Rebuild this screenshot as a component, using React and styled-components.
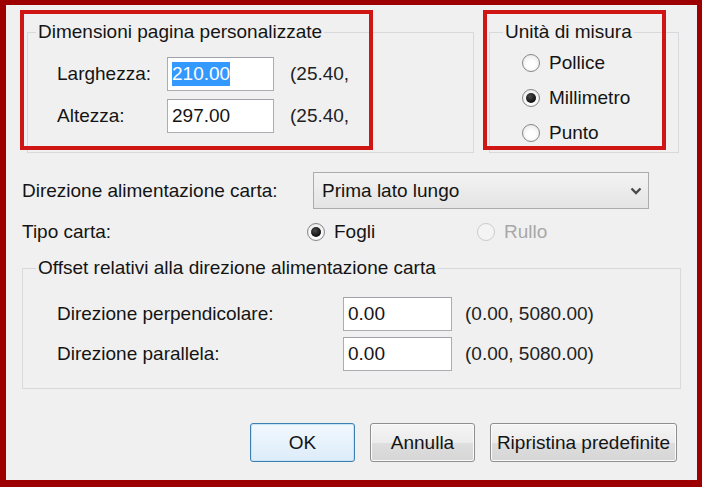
import React from "react";
import styled, { createGlobalStyle } from "styled-components";

const GlobalStyle = createGlobalStyle`
  html, body {
    margin: 0;
    padding: 0;
    background: #f0f0f0;
  }
  body {
    font-family: "Liberation Sans", Arial, sans-serif;
    font-size: 19px;
    color: #141414;
  }
`;

const Dialog = styled.div`
  position: relative;
  box-sizing: border-box;
  width: 702px;
  height: 487px;
  border-style: solid;
  border-color: #9c0000;
  border-width: 5px 5px 7px 6px;
  background: #f0f0f0;
  padding: 16px 16px 0 16px;
  display: flex;
  flex-direction: column;
`;

const TopRow = styled.div`
  display: flex;
  gap: 15px;
  padding-left: 5px;
`;

const GroupBox = styled.fieldset`
  box-sizing: border-box;
  margin: 0;
  padding: 0;
  min-width: 0;
  width: ${(p) => p.$w}px;
  height: ${(p) => p.$h}px;
  border: 1px solid #d7d9dc;
`;

const Legend = styled.legend`
  margin-left: ${(p) => p.$indent}px;
  padding: 0 2px;
  line-height: 22px;
`;

const FieldGrid = styled.div`
  display: grid;
  grid-template-columns: ${(p) => p.$cols};
  column-gap: ${(p) => p.$gap}px;
  row-gap: ${(p) => p.$rowGap}px;
  align-items: center;
  padding: ${(p) => p.$pad};
`;

const TextBox = styled.div`
  box-sizing: border-box;
  height: 34px;
  display: flex;
  align-items: center;
  padding-left: 4px;
  background: #fff;
  border: 1px solid #abadb3;
  border-top-color: #9fa2a9;
`;

const Selected = styled.span`
  background: #3399ff;
  color: #fff;
  line-height: 24px;
`;

const Hint = styled.span`
  color: #222;
  white-space: nowrap;
`;

const RadioList = styled.div`
  display: flex;
  flex-direction: column;
  padding: 2px 0 0 32px;
`;

const RadioItem = styled.label`
  display: flex;
  align-items: center;
  gap: 9px;
  height: ${(p) => p.$h || 35}px;
  width: ${(p) => (p.$w ? `${p.$w}px` : "auto")};
  color: ${(p) => (p.$disabled ? "#a8a8a8" : "#141414")};
`;

const RadioCircle = styled.span`
  position: relative;
  box-sizing: border-box;
  width: 18px;
  height: 18px;
  border-radius: 50%;
  border: 1px solid ${(p) => (p.$disabled ? "#cbcbcb" : "#85878a")};
  background: ${(p) =>
    p.$disabled
      ? "#f4f4f4"
      : "radial-gradient(circle at 50% 60%, #ffffff 30%, #e2e2e2 100%)"};
  flex-shrink: 0;

  &::after {
    content: "";
    display: ${(p) => (p.$checked ? "block" : "none")};
    position: absolute;
    left: 3px;
    top: 3px;
    width: 10px;
    height: 10px;
    border-radius: 50%;
    background: radial-gradient(circle at 40% 35%, #4a4a4a 0%, #0f0f0f 70%);
  }
`;

const FormRow = styled.div`
  display: flex;
  align-items: center;
  height: ${(p) => p.$h}px;
  margin-top: ${(p) => p.$mt}px;
`;

const RowLabel = styled.span`
  width: ${(p) => p.$w}px;
  flex-shrink: 0;
`;

const Combo = styled.div`
  box-sizing: border-box;
  width: 336px;
  height: 37px;
  display: flex;
  align-items: center;
  justify-content: space-between;
  padding: 0 6px 0 8px;
  border: 1px solid #acacac;
  background: linear-gradient(#f3f3f3, #e4e4e4);
`;

const OffsetBox = styled(GroupBox)`
  margin-top: 10px;
`;

const ButtonRow = styled.div`
  display: flex;
  justify-content: flex-end;
  gap: 15px;
  padding-right: 4px;
  margin-top: 34px;
`;

const Button = styled.button`
  box-sizing: border-box;
  width: ${(p) => p.$w}px;
  height: 39px;
  font-family: inherit;
  font-size: 19px;
  color: #141414;
  border-radius: 3px;
  border: 1px solid ${(p) => (p.$default ? "#3c7fb1" : "#8f8f8f")};
  background: ${(p) =>
    p.$default
      ? "linear-gradient(#f2f8fd, #dcecf9)"
      : "linear-gradient(#f5f5f5 0%, #ececec 50%, #dedede 51%, #d6d6d6 100%)"};
  box-shadow: inset 0 0 0 1px ${(p) => (p.$default ? "#c8e3f6" : "#fbfbfb")};
  padding: 0;
`;

const Highlight = styled.div`
  position: absolute;
  box-sizing: border-box;
  top: 5px;
  left: ${(p) => p.$left}px;
  width: ${(p) => p.$w}px;
  height: 140px;
  border: 4px solid #d01515;
  pointer-events: none;
`;

const Chevron = () => (
  <svg width="12" height="8" viewBox="0 0 12 8">
    <path d="M1.5 1.5 L6 6 L10.5 1.5" fill="none" stroke="#4a4a4a" strokeWidth="2.4" />
  </svg>
);

const Radio = ({ label, checked, disabled, w, h }) => (
  <RadioItem $disabled={disabled} $w={w} $h={h}>
    <RadioCircle $checked={checked} $disabled={disabled} />
    {label}
  </RadioItem>
);

export default function App() {
  return (
    <>
      <GlobalStyle />
      <Dialog>
        <TopRow>
          <GroupBox $w={447} $h={132}>
            <Legend $indent={8}>Dimensioni pagina personalizzate</Legend>
            <FieldGrid $cols="94px 107px auto" $gap={16} $rowGap={8} $pad="14px 0 0 29px">
              <span>Larghezza:</span>
              <TextBox>
                <Selected>210.00</Selected>
              </TextBox>
              <Hint>(25.40,</Hint>
              <span>Altezza:</span>
              <TextBox>297.00</TextBox>
              <Hint>(25.40,</Hint>
            </FieldGrid>
          </GroupBox>
          <GroupBox $w={190} $h={132}>
            <Legend $indent={13}>Unità di misura</Legend>
            <RadioList>
              <Radio label="Pollice" />
              <Radio label="Millimetro" checked />
              <Radio label="Punto" />
            </RadioList>
          </GroupBox>
        </TopRow>

        <FormRow $h={37} $mt={19}>
          <RowLabel $w={291}>Direzione alimentazione carta:</RowLabel>
          <Combo>
            <span>Prima lato lungo</span>
            <Chevron />
          </Combo>
        </FormRow>

        <FormRow $h={30} $mt={8}>
          <RowLabel $w={285}>Tipo carta:</RowLabel>
          <Radio label="Fogli" checked w={170} h={30} />
          <Radio label="Rullo" disabled h={30} />
        </FormRow>

        <OffsetBox $w={659} $h={132}>
          <Legend $indent={13}>Offset relativi alla direzione alimentazione carta</Legend>
          <FieldGrid $cols="273px 109px auto" $gap={13} $rowGap={6} $pad="18px 0 0 34px">
            <span>Direzione perpendicolare:</span>
            <TextBox>0.00</TextBox>
            <Hint>(0.00, 5080.00)</Hint>
            <span>Direzione parallela:</span>
            <TextBox>0.00</TextBox>
            <Hint>(0.00, 5080.00)</Hint>
          </FieldGrid>
        </OffsetBox>

        <ButtonRow>
          <Button $w={105} $default>OK</Button>
          <Button $w={105}>Annulla</Button>
          <Button $w={187}>Ripristina predefinite</Button>
        </ButtonRow>

        <Highlight $left={14} $w={353} />
        <Highlight $left={477} $w={183} />
      </Dialog>
    </>
  );
}
